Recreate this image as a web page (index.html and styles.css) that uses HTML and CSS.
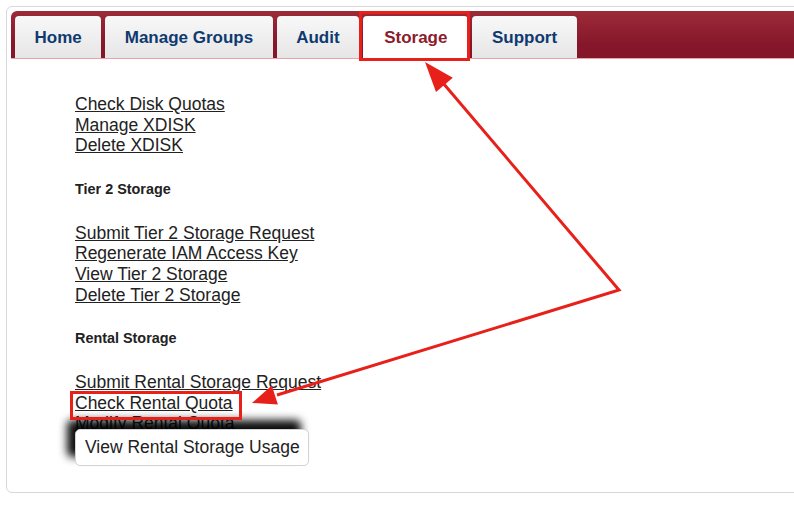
FILE: index.html
```html
<!DOCTYPE html>
<html lang="en">
<head>
<meta charset="utf-8">
<title>Storage</title>
<link rel="stylesheet" href="styles.css">
</head>
<body>
<div class="page">
  <div class="panel">
    <nav class="tabbar">
      <a class="tab">Home</a>
      <a class="tab">Manage Groups</a>
      <a class="tab">Audit</a>
      <a class="tab active">Storage</a>
      <a class="tab">Support</a>
    </nav>
    <div class="content">
      <div class="links">
        <a href="#">Check Disk Quotas</a>
        <a href="#">Manage XDISK</a>
        <a href="#">Delete XDISK</a>
      </div>
      <h4 class="section">Tier 2 Storage</h4>
      <div class="links">
        <a href="#">Submit Tier 2 Storage Request</a>
        <a href="#">Regenerate IAM Access Key</a>
        <a href="#">View Tier 2 Storage</a>
        <a href="#">Delete Tier 2 Storage</a>
      </div>
      <h4 class="section">Rental Storage</h4>
      <div class="links last">
        <a href="#">Submit Rental Storage Request</a>
        <a href="#">Check Rental Quota</a>
        <a href="#">Modify Rental Quota</a>
      </div>
    </div>
  </div>
  <div class="tooltip">View Rental Storage Usage</div>
  <svg class="annotations" width="794" height="514" viewBox="0 0 794 514">
    <rect x="360.5" y="12.5" width="108" height="47" fill="none" stroke="#e8201a" stroke-width="3"/>
    <rect x="71.5" y="392.5" width="169" height="26" fill="none" stroke="#e8201a" stroke-width="3"/>
    <polyline points="443,83 619,290 277,395" fill="none" stroke="#e8201a" stroke-width="3" stroke-linejoin="miter"/>
    <polygon points="425,62 452.8,77.7 436,91.9" fill="#e8201a"/>
    <polygon points="252,403 277.9,404.6 271.8,385.5" fill="#e8201a"/>
  </svg>
</div>
</body>
</html>
```
FILE: styles.css
```css
html, body {
  margin: 0;
  padding: 0;
  background: #ffffff;
  overflow: hidden;
}

body {
  font-family: "Liberation Sans", Arial, sans-serif;
  color: #222222;
}

.page {
  position: relative;
  width: 794px;
  height: 514px;
  overflow: hidden;
}

.panel {
  margin: 6px 0 0 6px;
  width: 820px;
  border: 1px solid #d4d9dc;
  border-radius: 6px;
  padding: 4px;
}

.tabbar {
  display: flex;
  gap: 4px;
  padding: 5px 0 0 4px;
  background: linear-gradient(#9c2b39, #86172a 70%, #84162a);
  border-top-left-radius: 6px;
  border-bottom: 1px solid #eba3a8;
}

.tab {
  box-sizing: border-box;
  height: 42px;
  display: flex;
  align-items: center;
  padding: 2px 19.5px 0;
  background: linear-gradient(#f8f8f8, #e6e6e6);
  border-radius: 4px 4px 0 0;
  color: #0f3a70;
  font-weight: bold;
  font-size: 17px;
  text-decoration: none;
}

.tab.active {
  background: #ffffff;
  color: #8a1c2b;
  padding: 2px 21px 0;
}

.content {
  padding: 35px 0 53.6px 64px;
}

.links {
  display: flex;
  flex-direction: column;
  align-items: flex-start;
}

.links a {
  font-size: 17.5px;
  line-height: 20.6px;
  color: #222222;
  text-decoration: underline;
}

.section {
  margin: 25px 0;
  font-size: 14.4px;
  line-height: 17px;
  font-weight: bold;
  color: #222222;
}

.tooltip {
  position: absolute;
  left: 75px;
  top: 429px;
  box-sizing: border-box;
  width: 234px;
  height: 37px;
  border: 1px solid #cfd4d8;
  border-radius: 5px;
  background: #ffffff;
  color: #222222;
  font-size: 17.5px;
  line-height: 35px;
  padding: 0 0 0 9px;
  box-shadow: -8px -9px 9px rgba(0, 0, 0, 0.95);
  z-index: 2;
}

.annotations {
  position: absolute;
  left: 0;
  top: 0;
  pointer-events: none;
  z-index: 3;
}
```
